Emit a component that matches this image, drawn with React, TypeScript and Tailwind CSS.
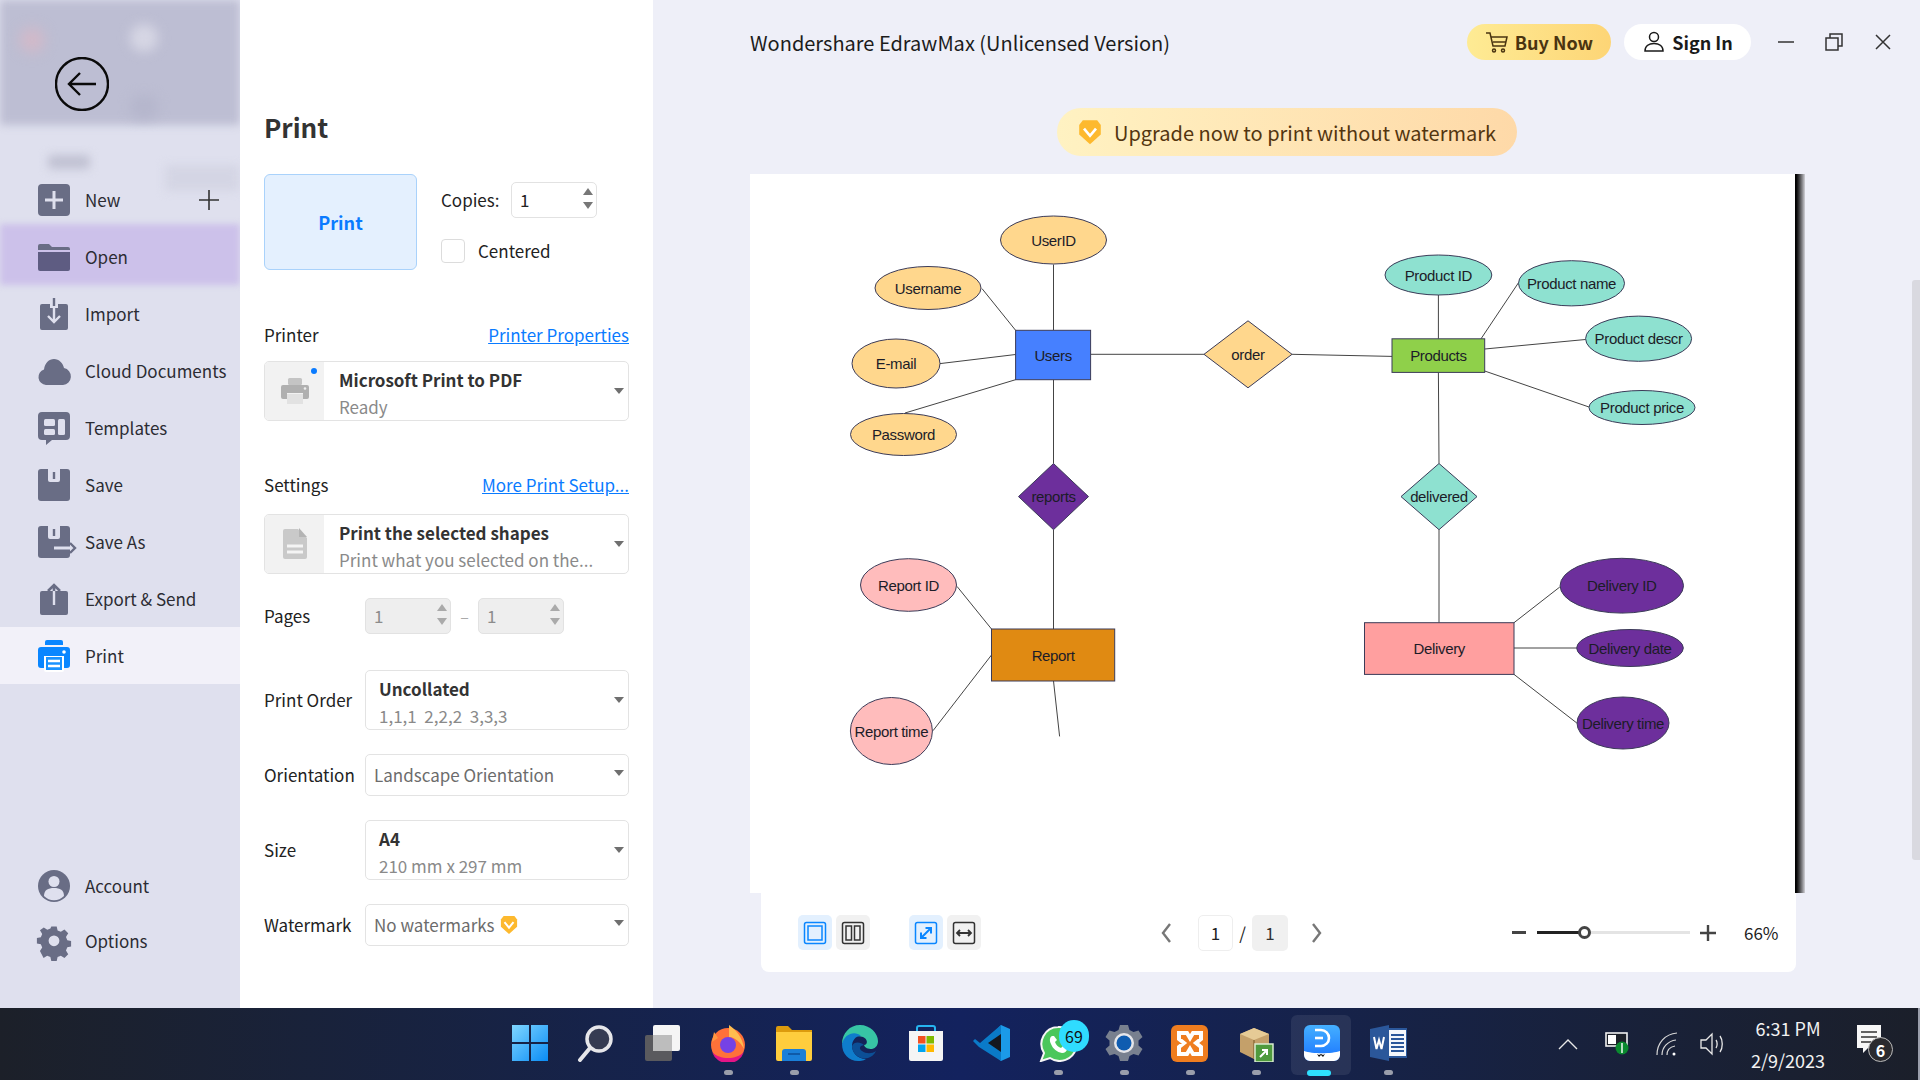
import type { ReactNode } from 'react'

const UI_FONT = "font-['Noto_Sans_CJK_SC','Noto_Sans',sans-serif]"

function Caret({ className = '' }: { className?: string }) {
  return (
    <svg width="10" height="6" viewBox="0 0 10 6" className={className}>
      <path d="M0 0h10L5 6z" fill="#6f6f6f" />
    </svg>
  )
}

function Diamond({ size = 20 }: { size?: number }) {
  return (
    <svg width={size} height={size * 1.1} viewBox="0 0 20 22">
      <path d="M4 1h12l3 4v8l-9 8-9-8V5z" fill="#fdb92e" />
      <path d="M5 8l5 6 5-6" fill="none" stroke="#fff" strokeWidth="2.2" />
    </svg>
  )
}

/* ---------- sidebar icons ---------- */
const ICON = '#696d85'
const SIDE_ICONS: Record<string, ReactNode> = {
  New: (
    <>
      <rect x="0" y="0" width="32" height="32" rx="4" fill={ICON} />
      <path d="M16 7v18M7 16h18" stroke="#dfe0ee" strokeWidth="3" />
    </>
  ),
  Open: (
    <>
      <path d="M0 5a2 2 0 0 1 2-2h9l3 3h16a2 2 0 0 1 2 2v1H0z" fill={ICON} />
      <path d="M0 11h32v17a2 2 0 0 1-2 2H2a2 2 0 0 1-2-2z" fill="#5e5c82" />
    </>
  ),
  Import: (
    <>
      <path d="M4 6h8v4h8V6h8a2 2 0 0 1 2 2v22a2 2 0 0 1-2 2H4a2 2 0 0 1-2-2V8a2 2 0 0 1 2-2z" fill={ICON} />
      <path d="M16 8v16M10 18l6 6 6-6" fill="none" stroke="#dfe0ee" strokeWidth="2.4" />
      <path d="M16 0v8" stroke={ICON} strokeWidth="2.4" />
    </>
  ),
  'Cloud Documents': (
    <path
      d="M8 30a8 8 0 0 1-2-15.6C7 8 11 4 16 4c5 0 9 4 10 9a8.6 8.6 0 0 1-1 17z"
      fill={ICON}
    />
  ),
  Templates: (
    <>
      <path d="M4 0h24a4 4 0 0 1 4 4v20a4 4 0 0 1-4 4H14l-6 5v-5H4a4 4 0 0 1-4-4V4a4 4 0 0 1 4-4z" fill={ICON} />
      <rect x="6" y="7" width="11" height="7" rx="1.5" fill="#dfe0ee" />
      <rect x="6" y="17" width="11" height="6" rx="1.5" fill="#dfe0ee" />
      <rect x="20" y="7" width="7" height="16" rx="1.5" fill="#dfe0ee" />
    </>
  ),
  Save: (
    <>
      <rect x="0" y="0" width="32" height="32" rx="3" fill={ICON} />
      <path d="M10 0h12v11a2 2 0 0 1-2 2h-8a2 2 0 0 1-2-2z" fill="#dfe0ee" />
      <path d="M16 3v7" stroke={ICON} strokeWidth="2.4" />
    </>
  ),
  'Save As': (
    <>
      <rect x="0" y="0" width="32" height="32" rx="3" fill={ICON} />
      <path d="M10 0h12v11a2 2 0 0 1-2 2h-8a2 2 0 0 1-2-2z" fill="#dfe0ee" />
      <path d="M16 3v7" stroke={ICON} strokeWidth="2.4" />
      <path d="M16 22h17" stroke="#dfe0ee" strokeWidth="3" />
      <path d="M32 17l5 5-5 5" fill="none" stroke={ICON} strokeWidth="2.4" />
    </>
  ),
  'Export & Send': (
    <>
      <path d="M4 8h24a2 2 0 0 1 2 2v20a2 2 0 0 1-2 2H4a2 2 0 0 1-2-2V10a2 2 0 0 1 2-2z" fill={ICON} />
      <path d="M16 22V8" stroke="#dfe0ee" strokeWidth="2.4" />
      <path d="M16 8V2M10 8l6-6 6 6" fill="none" stroke={ICON} strokeWidth="2.6" />
    </>
  ),
  Print: (
    <>
      <path d="M7 2a2 2 0 0 1 2-2h14a2 2 0 0 1 2 2v3H7z" fill="#0a86ff" />
      <path d="M3 7h26a3 3 0 0 1 3 3v15a3 3 0 0 1-3 3h-3V16H6v12H3a3 3 0 0 1-3-3V10a3 3 0 0 1 3-3z" fill="#0a86ff" />
      <circle cx="26" cy="12" r="1.8" fill="#fff" />
      <path d="M6 16h20v14a2 2 0 0 1-2 2H8a2 2 0 0 1-2-2z" fill="#fff" />
      <path d="M8 17h16v13H8z" fill="#1a92ff" />
      <path d="M10 21h12M10 26h12" stroke="#fff" strokeWidth="2.4" />
    </>
  ),
  Account: (
    <>
      <circle cx="16" cy="16" r="16" fill={ICON} />
      <circle cx="16" cy="11.5" r="5.5" fill="#dfe0ee" />
      <path d="M6 26c0-6 4-8 10-8s10 2 10 8a14 14 0 0 1-20 0z" fill="#dfe0ee" />
    </>
  ),
  Options: (
    <path
      fillRule="evenodd"
      d="M13 0h6l1 4.5 3.6 1.5 4-2.5 4.200 4.200-2.500 4 1.500 3.600 4.200 1v6l-4.200 1-1.500 3.600 2.500 4-4.200 4.200-4-2.500-3.600 1.500-1 4.400h-6l-1-4.400-3.600-1.500-4 2.500L.400 27.400l2.500-4L1.400 19.800-3 19v-6l4.400-1 1.500-3.600-2.500-4L4.600 1.200l4 2.500L12 2.200z M16 10a6 6 0 1 0 0 12a6 6 0 0 0 0-12z"
      transform="translate(1.600 1.400) scale(.9)"
      fill={ICON}
    />
  ),
}

function SideRow({ label, active = false, hot = false, plus = false }: { label: string; active?: boolean; hot?: boolean; plus?: boolean }) {
  return (
    <div
      className={`relative flex h-[57px] items-center gap-[15px] pl-[38px] text-[17px] text-[#2c2c33] ${
        active ? 'bg-[#f2f1f9]' : ''
      }`}
    >
      {hot && <div className="absolute inset-x-0 bottom-0 top-[-4px] bg-[#ccc1ea] blur-[3px]" />}
      <svg width="32" height="32" viewBox="0 0 32 32" className="relative shrink-0 overflow-visible">
        {SIDE_ICONS[label]}
      </svg>
      <span className="relative whitespace-nowrap">{label}</span>
      {plus && (
        <svg width="22" height="22" viewBox="0 0 22 22" className="absolute left-[198px] top-[18px]">
          <path d="M11 1v20M1 11h20" stroke="#333" strokeWidth="1.6" />
        </svg>
      )}
    </div>
  )
}

function Sidebar() {
  return (
    <aside className="relative flex w-[240px] shrink-0 flex-col overflow-hidden bg-[#dfe0ee]">
      {/* blurred app window showing through the backstage */}
      <div className="absolute inset-x-0 top-0 h-[125px] bg-[#bdbed3] blur-[4px]" />
      <div className="absolute left-[20px] top-[28px] h-[24px] w-[24px] rounded-full bg-[#d3b9c8] blur-[7px]" />
      <div className="absolute left-[130px] top-[24px] h-[28px] w-[28px] rounded-full bg-[#d6d6e4] blur-[6px]" />
      <div className="absolute left-[130px] top-[95px] h-[24px] w-[28px] rounded-full bg-[#b5b6cc] blur-[6px]" />
      <div className="absolute left-[48px] top-[155px] h-[14px] w-[42px] rounded bg-[#c0c1d2] blur-[5px]" />
      <div className="absolute left-[165px] top-[165px] h-[26px] w-[75px] rounded bg-[#d4d5e4] blur-[5px]" />

      <div className="relative h-[171px] pl-[55px] pt-[57px]">
        <svg width="54" height="54" viewBox="0 0 54 54">
          <circle cx="27" cy="27" r="26" fill="none" stroke="#0a0a0a" strokeWidth="2.4" />
          <path d="M41 27H14M25 16L14 27l11 11" fill="none" stroke="#0a0a0a" strokeWidth="2.4" />
        </svg>
      </div>
      <div className="relative flex flex-1 flex-col">
        <SideRow label="New" plus />
        <SideRow label="Open" hot />
        <SideRow label="Import" />
        <SideRow label="Cloud Documents" />
        <SideRow label="Templates" />
        <SideRow label="Save" />
        <SideRow label="Save As" />
        <SideRow label="Export & Send" />
        <SideRow label="Print" active />
        <div className="flex-1" />
        <SideRow label="Account" />
        <div className="-mt-[2px]">
          <SideRow label="Options" />
        </div>
        <div className="h-[39px]" />
      </div>
    </aside>
  )
}

/* ---------- print form ---------- */
function Spinner({ value, disabled = false, width }: { value: string; disabled?: boolean; width: string }) {
  return (
    <div
      className={`relative flex h-[36px] items-center rounded-[5px] border border-[#e2e2e2] pl-[8px] text-[17px] ${width} ${
        disabled ? 'bg-[#eeeeee] text-[#8c8c8c]' : 'bg-white text-[#222]'
      }`}
    >
      {value}
      <div className="absolute right-[3px] top-[5px] flex flex-col gap-[7px]">
        <svg width="10" height="7" viewBox="0 0 10 7"><path d="M5 0l5 7H0z" fill={disabled ? '#aaa' : '#777'} /></svg>
        <svg width="10" height="7" viewBox="0 0 10 7"><path d="M0 0h10L5 7z" fill={disabled ? '#aaa' : '#777'} /></svg>
      </div>
    </div>
  )
}

function Select({ title, sub, height, icon }: { title: string; sub: string; height: string; icon?: ReactNode }) {
  return (
    <div className={`relative flex w-full overflow-hidden rounded-[5px] border border-[#e3e3e3] bg-white ${height}`}>
      {icon && (
        <div className="flex w-[59px] shrink-0 items-center justify-center bg-[#f2f2f2]">{icon}</div>
      )}
      <div className={`flex flex-col justify-center pt-[4px] ${icon ? 'pl-[15px]' : 'pl-[13px]'}`}>
        <div className="whitespace-pre text-[17px] font-bold leading-[27px] text-[#333]">{title}</div>
        <div className="whitespace-pre text-[17px] leading-[27px] text-[#8a8a8a]">{sub}</div>
      </div>
      <Caret className="absolute right-[4px] top-[26px]" />
    </div>
  )
}

function OneLine({ children }: { children: ReactNode }) {
  return (
    <div className="relative flex h-[42px] w-full items-center rounded-[5px] border border-[#e3e3e3] bg-white pl-[8px] text-[17px] text-[#6c6c6c]">
      {children}
      <Caret className="absolute right-[4px] top-[15px]" />
    </div>
  )
}

function FormRow({ label, mt, children }: { label: string; mt: string; children: ReactNode }) {
  return (
    <div className={`flex items-center ${mt}`}>
      <div className="w-[101px] shrink-0 whitespace-nowrap text-[17px] text-[#222]">{label}</div>
      <div className="flex-1">{children}</div>
    </div>
  )
}

function PrintPanel() {
  return (
    <section className="w-[413px] shrink-0 bg-white px-[24px] pt-[107px]">
      <h1 className="h-[40px] text-[26px] font-bold leading-[40px] text-[#333]">Print</h1>

      <div className="mt-[27px] flex h-[96px]">
        <div className="flex w-[153px] items-center justify-center rounded-[6px] border border-[#a9d2fb] bg-[#e4f0fe] text-[18px] font-bold text-[#0a7bff]">
          Print
        </div>
        <div className="ml-[24px] flex flex-col">
          <div className="mt-[8px] flex items-center text-[17px] text-[#222]">
            <span className="w-[70px]">Copies:</span>
            <Spinner value="1" width="w-[86px]" />
          </div>
          <div className="mt-[20px] flex items-center gap-[13px] text-[17px] text-[#222]">
            <div className="h-[24px] w-[24px] rounded-[4px] border border-[#dcdcdc] bg-white" />
            Centered
          </div>
        </div>
      </div>

      <div className="mt-[53px] flex h-[24px] items-center justify-between text-[17px]">
        <span className="text-[#222]">Printer</span>
        <span className="text-[#0a7bff] underline">Printer Properties</span>
      </div>
      <div className="relative mt-[14px]">
        <Select
          title="Microsoft Print to PDF"
          sub="Ready"
          height="h-[60px]"
          icon={
            <svg width="30" height="30" viewBox="0 0 30 30">
              <rect x="8" y="2" width="14" height="7" rx="1.500" fill="#c4c4c4" />
              <path d="M3 9h24a2 2 0 0 1 2 2v10a2 2 0 0 1-2 2h-4v-6H7v6H3a2 2 0 0 1-2-2V11a2 2 0 0 1 2-2z" fill="#b0b0b0" />
              <path d="M7 18h16v10H7z" fill="#e2e2e2" />
              <circle cx="25" cy="12.500" r="1.300" fill="#eee" />
            </svg>
          }
        />
        <div className="absolute left-[47px] top-[7px] h-[6px] w-[6px] rounded-full bg-[#0a7bff]" />
      </div>

      <div className="mt-[52px] flex h-[24px] items-center justify-between text-[17px]">
        <span className="text-[#222]">Settings</span>
        <span className="text-[#0a7bff] underline">More Print Setup...</span>
      </div>
      <div className="mt-[17px]">
        <Select
          title="Print the selected shapes"
          sub="Print what you selected on the..."
          height="h-[60px]"
          icon={
            <svg width="26" height="32" viewBox="0 0 26 32">
              <path d="M3 1h13l9 9v19a2 2 0 0 1-2 2H3a2 2 0 0 1-2-2V3a2 2 0 0 1 2-2z" fill="#c9c9c9" />
              <path d="M17 0l8 9h-8z" fill="#b4b4b4" />
              <path d="M5 18h16M5 24h16" stroke="#f4f4f4" strokeWidth="3" />
            </svg>
          }
        />
      </div>

      <FormRow label="Pages" mt="mt-[24px]">
        <div className="flex items-center">
          <Spinner value="1" disabled width="w-[86px]" />
          <span className="w-[27px] text-center text-[#aaa]">–</span>
          <Spinner value="1" disabled width="w-[86px]" />
        </div>
      </FormRow>
      <FormRow label="Print Order" mt="mt-[36px]">
        <Select title="Uncollated" sub="1,1,1  2,2,2  3,3,3" height="h-[60px]" />
      </FormRow>
      <FormRow label="Orientation" mt="mt-[24px]">
        <OneLine>Landscape Orientation</OneLine>
      </FormRow>
      <FormRow label="Size" mt="mt-[24px]">
        <Select title="A4" sub="210 mm x 297 mm" height="h-[60px]" />
      </FormRow>
      <FormRow label="Watermark" mt="mt-[24px]">
        <OneLine>
          <span className="mr-[5px]">No watermarks</span>
          <Diamond size={18} />
        </OneLine>
      </FormRow>
    </section>
  )
}

/* ---------- ER diagram ---------- */
const STROKE = '#3b3b58'
const LINES = [
  [1053.5, 264.5, 1053.5, 330], [982, 288.6, 1015.6, 330.3], [940, 363.6, 1015.6, 354.5], [905, 413, 1015.6, 379.7],
  [1090.6, 354.3, 1204, 354.3], [1292, 354.3, 1392, 356.4], [1053.5, 379.7, 1053.5, 463.5], [1053.5, 529.7, 1053.5, 629],
  [957, 586.4, 991.5, 629], [933, 730.7, 991.5, 655], [1053.5, 681, 1059.6, 736.4],
  [1438.4, 295, 1438.4, 338.8], [1481, 338.8, 1518.3, 283], [1484.7, 349, 1585.5, 339.5], [1484.7, 371, 1589, 407],
  [1438.4, 372.4, 1439, 463.5], [1439, 529.7, 1439, 622.7], [1514, 622.7, 1559.8, 587], [1514, 648, 1576.8, 648], [1514, 674.4, 1576.8, 723],
]
const ELLIPSES: [number, number, number, number, string, string][] = [
  [1053.5, 240, 53, 24, '#ffd78d', 'UserID'],
  [928, 288, 53, 21.5, '#ffd78d', 'Username'],
  [896, 363.5, 44, 24.5, '#ffd78d', 'E-mail'],
  [903.5, 434.5, 53, 21, '#ffd78d', 'Password'],
  [908.5, 585, 48, 26.3, '#ffbcbc', 'Report ID'],
  [891.4, 731, 41, 33.5, '#ffbcbc', 'Report time'],
  [1438.4, 275, 53.4, 20, '#8ee1d0', 'Product ID'],
  [1571.5, 283.3, 53, 22.6, '#8ee1d0', 'Product name'],
  [1638.6, 338.7, 53, 22.6, '#8ee1d0', 'Product descr'],
  [1642, 407.5, 53, 17, '#8ee1d0', 'Product price'],
  [1621.8, 585.7, 61.7, 27.4, '#6d2f9c', 'Delivery ID'],
  [1630, 648, 53.3, 18.5, '#6d2f9c', 'Delivery date'],
  [1623, 723, 46, 26, '#6d2f9c', 'Delivery time'],
]
const RECTS: [number, number, number, number, string, string][] = [
  [1015.6, 330.3, 75, 49.4, '#4680ff', 'Users'],
  [1392, 338.8, 92.7, 33.6, '#8fd04a', 'Products'],
  [991.5, 629, 123.2, 52, '#e08a12', 'Report'],
  [1364.5, 622.7, 149.5, 51.7, '#ff9f9f', 'Delivery'],
]
const DIAMONDS: [number, number, number, number, string, string][] = [
  [1248, 354.3, 44, 33.5, '#ffd78d', 'order'],
  [1053.5, 496.6, 35, 33.1, '#6d2f9c', 'reports'],
  [1439, 496.6, 38, 33.1, '#8ee1d0', 'delivered'],
]

function Label({ x, y, children }: { x: number; y: number; children: string }) {
  return (
    <text
      x={x}
      y={y + 5.5}
      textAnchor="middle"
      fontFamily="'Liberation Sans', sans-serif"
      fontSize="15"
      letterSpacing="-0.35"
      fill="#1c1c28"
    >
      {children}
    </text>
  )
}

function ErDiagram() {
  return (
    <svg width="1045" height="719" viewBox="750 174 1045 719" className="block bg-white">
      {LINES.map((l, i) => (
        <line key={i} x1={l[0]} y1={l[1]} x2={l[2]} y2={l[3]} stroke="#444" strokeWidth="1" />
      ))}
      {ELLIPSES.map(([cx, cy, rx, ry, fill, name]) => (
        <g key={name}>
          <ellipse cx={cx} cy={cy} rx={rx} ry={ry} fill={fill} stroke={STROKE} strokeWidth="1" />
          <Label x={cx} y={cy}>{name}</Label>
        </g>
      ))}
      {RECTS.map(([x, y, w, h, fill, name]) => (
        <g key={name}>
          <rect x={x} y={y} width={w} height={h} fill={fill} stroke={STROKE} strokeWidth="1" />
          <Label x={x + w / 2} y={y + h / 2}>{name}</Label>
        </g>
      ))}
      {DIAMONDS.map(([cx, cy, rx, ry, fill, name]) => (
        <g key={name}>
          <path d={`M${cx - rx} ${cy}L${cx} ${cy - ry}L${cx + rx} ${cy}L${cx} ${cy + ry}z`} fill={fill} stroke={STROKE} strokeWidth="1" />
          <Label x={cx} y={cy}>{name}</Label>
        </g>
      ))}
    </svg>
  )
}

/* ---------- right hand side ---------- */
function ToolBtn({ on, children, className = '' }: { on?: boolean; children: ReactNode; className?: string }) {
  return (
    <div className={`flex h-[35px] w-[34px] items-center justify-center rounded-[5px] ${on ? 'bg-[#e3f0fe]' : 'bg-[#f1f1f1]'} ${className}`}>
      <svg width="24" height="24" viewBox="0 0 24 24" fill="none" stroke={on ? '#0a86ff' : '#333'} strokeWidth="1.5">
        <rect x="1.500" y="1.500" width="21" height="21" rx="2" />
        {children}
      </svg>
    </div>
  )
}

function Toolbar() {
  return (
    <div className="ml-[11px] flex h-[79px] w-[1035px] items-center rounded-b-[8px] bg-white pl-[37px] text-[17px]">
      <ToolBtn on><rect x="5" y="5" width="14" height="14" /></ToolBtn>
      <ToolBtn className="ml-[4px]"><rect x="5" y="5" width="5.500" height="14" /><rect x="13.500" y="5" width="5.500" height="14" /></ToolBtn>
      <ToolBtn on className="ml-[39px]"><path d="M7 17L17 7M11.500 7H17v5.500M7 11.500V17h5.500" strokeWidth="2" /></ToolBtn>
      <ToolBtn className="ml-[4px]"><path d="M5 12h14M8 9l-3 3 3 3M16 9l3 3-3 3" strokeWidth="1.800" /></ToolBtn>

      <svg width="12" height="20" viewBox="0 0 12 20" className="ml-[179px]">
        <path d="M10 1L3 10l7 9" fill="none" stroke="#777" strokeWidth="2.400" />
      </svg>
      <div className="ml-[26px] flex h-[36px] w-[35px] items-center justify-center rounded-[5px] border border-[#eeeeee] text-[#222]">1</div>
      <span className="w-[19px] text-center text-[#222]">/</span>
      <div className="flex h-[36px] w-[36px] items-center justify-center rounded-[5px] bg-[#f0f0f0] text-[#333]">1</div>
      <svg width="12" height="20" viewBox="0 0 12 20" className="ml-[23px]">
        <path d="M2 1l7 9-7 9" fill="none" stroke="#777" strokeWidth="2.400" />
      </svg>

      <div className="ml-[189px] h-[3px] w-[14px] bg-[#444]" />
      <div className="relative ml-[11px] h-[3px] w-[153px] bg-[#e4e4e4]">
        <div className="h-full w-[47px] bg-[#222]" />
        <div className="absolute left-[41px] top-[-5px] h-[13px] w-[13px] rounded-full border-[3px] border-[#444] bg-white" />
      </div>
      <svg width="16" height="16" viewBox="0 0 16 16" className="ml-[10px]">
        <path d="M8 0v16M0 8h16" stroke="#444" strokeWidth="2.400" />
      </svg>
      <span className="ml-[28px] text-[#222]">66%</span>
    </div>
  )
}

function TopIcons() {
  return (
    <div className="relative ml-[599px] mt-[4px] flex h-[30px] items-center">
      <svg width="24" height="24" viewBox="0 0 24 24" className="ml-[1px]" fill="none" stroke="#6a6a6a" strokeWidth="1.300">
        <circle cx="12" cy="12" r="10" />
        <path d="M9 9.500a3 3 0 1 1 4.500 2.600c-1 .6-1.500 1.200-1.500 2.400M12 16.500v1.500" />
      </svg>
      <div className="absolute left-[26px] top-[-8px] h-[8px] w-[8px] rounded-full bg-[#ff4040]" />
      <Caret className="ml-[4px] scale-75" />
      <svg width="24" height="24" viewBox="0 0 24 24" className="ml-[15px]" fill="none" stroke="#6a6a6a" strokeWidth="1.300">
        <path d="M3 18c2-2 2-4 2-7a7 7 0 0 1 14 0c0 3 0 5 2 7zM9 21.500h6" />
      </svg>
      <svg width="24" height="24" viewBox="0 0 24 24" className="ml-[20px]" fill="none" stroke="#6a6a6a" strokeWidth="1.300">
        <circle cx="7" cy="7" r="4" /><circle cx="17" cy="7" r="4" /><circle cx="7" cy="17" r="4" /><circle cx="17" cy="17" r="4" />
      </svg>
      <Caret className="ml-[1px] scale-75" />
      <svg width="24" height="24" viewBox="0 0 24 24" className="ml-[12px]" fill="none" stroke="#6a6a6a" strokeWidth="1.300">
        <path d="M8 2L2 6l2.500 5L7 10v12h10V10l2.500 1L22 6l-6-4c-1 3-7 3-8 0z" />
      </svg>
      <Caret className="ml-[3px] scale-75" />
      <svg width="24" height="24" viewBox="0 0 24 24" className="ml-[15px]" fill="none" stroke="#6a6a6a" strokeWidth="1.300">
        <path d="M10 1.500h4l.7 3 2.500 1.200 2.800-1.500 2.200 3.400-2.400 2 .1 2.800 2.300 2-2.100 3.500-2.900-1.400-2.500 1.300-.7 3.200h-4l-.7-3.200-2.500-1.300-2.900 1.400-2.100-3.500 2.300-2 .1-2.800-2.400-2 2.200-3.400 2.800 1.500 2.500-1.200z" />
        <circle cx="12" cy="12" r="3.500" />
      </svg>
    </div>
  )
}

function MainArea() {
  return (
    <main className="relative min-w-0 flex-1 bg-[#eeeff8] pl-[97px] pt-[24px]">
      <div className="flex h-[36px] items-center">
        <div className="w-[714px] translate-y-[1px] whitespace-nowrap text-[20px] text-[#1c1c1c]">
          Wondershare EdrawMax (Unlicensed Version)
        </div>
        <div className="ml-[3px] flex h-[36px] w-[144px] items-center justify-center gap-[6px] rounded-[18px] bg-gradient-to-r from-[#feeb94] to-[#fdd576] text-[18px] font-semibold text-[#4a3410]">
          <svg width="24" height="24" viewBox="0 0 24 24" fill="none" stroke="#4a3410" strokeWidth="1.500">
            <path d="M1 3h4l3 13h12l2-9H6" />
            <circle cx="9" cy="20.500" r="1.500" />
            <circle cx="18" cy="20.500" r="1.500" />
            <path d="M8 12h13" />
          </svg>
          Buy Now
        </div>
        <div className="ml-[13px] flex h-[36px] w-[127px] items-center justify-center gap-[6px] rounded-[18px] bg-white text-[18px] font-semibold text-[#1a1a1a]">
          <svg width="24" height="24" viewBox="0 0 24 24" fill="none" stroke="#1a1a1a" strokeWidth="1.500">
            <circle cx="12" cy="7" r="4.500" />
            <path d="M3 21c0-5 4-7.500 9-7.500s9 2.500 9 7.500z" />
          </svg>
          Sign In
        </div>
        <svg width="18" height="18" viewBox="0 0 18 18" className="ml-[26px]"><path d="M1 9h16" stroke="#333" strokeWidth="1.500" /></svg>
        <svg width="20" height="20" viewBox="0 0 20 20" className="ml-[29px]" fill="none" stroke="#333" strokeWidth="1.500">
          <rect x="2" y="6" width="12" height="12" />
          <path d="M6 6V2h12v12h-4" />
        </svg>
        <svg width="18" height="18" viewBox="0 0 18 18" className="ml-[30px]"><path d="M2 2l14 14M16 2L2 16" stroke="#333" strokeWidth="1.500" /></svg>
      </div>

      <div className="mt-[48px] flex h-[48px]">
        <div className="ml-[307px] flex h-[48px] w-[460px] shrink-0 items-center justify-center gap-[12px] rounded-[24px] bg-gradient-to-r from-[#fff2c2] to-[#fed9a8] text-[20px] text-[#53350f]">
          <Diamond size={24} />
          <span className="translate-y-[1px]">Upgrade now to print without watermark</span>
        </div>
        <TopIcons />
      </div>

      <div className="mt-[18px] flex">
        <ErDiagram />
        <div className="h-[719px] w-[10px] bg-gradient-to-r from-[#000000] to-[#d2d2d8]" />
      </div>
      <Toolbar />

      {/* scrollbar */}
      <div className="absolute right-0 top-[280px] h-[580px] w-[8px] rounded-l-[3px] bg-[#d9d9e0]" />
    </main>
  )
}

/* ---------- taskbar ---------- */
const TASK_ICONS: { key: string; dot?: boolean; node: ReactNode }[] = [
  {
    key: 'start',
    node: (
      <>
        <defs>
          <linearGradient id="win" x1="0" y1="0" x2="1" y2="1">
            <stop offset="0" stopColor="#7fd6ff" />
            <stop offset="1" stopColor="#0a8cf5" />
          </linearGradient>
        </defs>
        <path d="M1 1h17v17H1zM20 1h17v17H20zM1 20h17v17H1zM20 20h17v17H20z" fill="url(#win)" />
      </>
    ),
  },
  {
    key: 'search',
    node: (
      <>
        <circle cx="22" cy="15" r="12" fill="#353b52" stroke="#e6e6ea" strokeWidth="3.500" />
        <path d="M13 24L3 36" stroke="#e6e6ea" strokeWidth="4" strokeLinecap="round" />
      </>
    ),
  },
  {
    key: 'tasks',
    node: (
      <>
        <rect x="2" y="11" width="27" height="26" rx="2" fill="#5a5a5e" />
        <rect x="10" y="1" width="27" height="26" rx="2" fill="#f5f5f5" />
        <rect x="10" y="11" width="19" height="16" fill="#bdbdbd" />
      </>
    ),
  },
  {
    key: 'firefox',
    dot: true,
    node: (
      <>
        <circle cx="19" cy="21" r="17" fill="#ff7139" />
        <path d="M3 28a17 17 0 0 0 32 0c-8 8-24 8-32 0z" fill="#e31587" />
        <path d="M20 1c6 4 14 12 15 24-3-6-9-12-15-12z" fill="#ffbd4f" />
        <path d="M5 8l4 6-6 4z" fill="#ff9640" />
        <circle cx="19" cy="21" r="8" fill="#7542e5" />
      </>
    ),
  },
  {
    key: 'files',
    dot: true,
    node: (
      <>
        <path d="M1 4a2 2 0 0 1 2-2h10l4 4h20v4H1z" fill="#dc9b0d" />
        <path d="M1 8h36v27a2 2 0 0 1-2 2H3a2 2 0 0 1-2-2z" fill="#fecd3d" />
        <path d="M7 37V28a3 3 0 0 1 3-3h18a3 3 0 0 1 3 3v9z" fill="#1a7fd8" />
        <path d="M13 30h12" stroke="#0f5aa8" strokeWidth="2" />
      </>
    ),
  },
  {
    key: 'edge',
    node: (
      <>
        <path d="M19 1c10 0 18 8 18 16 0 4-2 7-6 8-4 0-7-1-8-4 4 0 4-6-1-8C12 10 5 14 1 20 1 9 9 1 19 1z" fill="#37c5a5" />
        <path d="M1 20C3 10 14 6 20 12c-6 0-9 5-9 10 0 6 5 13 14 13-3 2-6 2-8 2C8 37 1 30 1 20z" fill="#0f7dcc" />
        <path d="M11 22c0 8 8 14 16 12 3-1 6-3 8-7-4 3-10 3-14 0-3-2-3-5 2-6-3-3-10-4-12 1z" fill="#0c4f96" />
      </>
    ),
  },
  {
    key: 'store',
    node: (
      <>
        <path d="M10 8V4a2 2 0 0 1 2-2h14a2 2 0 0 1 2 2v4" fill="none" stroke="#26b4f0" strokeWidth="2" />
        <path d="M2 7h34v28a2 2 0 0 1-2 2H4a2 2 0 0 1-2-2z" fill="#f5f5f5" />
        <rect x="11" y="12" width="7.500" height="7.500" fill="#f25022" />
        <rect x="19.500" y="12" width="7.500" height="7.500" fill="#7fba00" />
        <rect x="11" y="20.500" width="7.500" height="7.500" fill="#00a4ef" />
        <rect x="19.500" y="20.500" width="7.500" height="7.500" fill="#ffb900" />
      </>
    ),
  },
  {
    key: 'vscode',
    node: (
      <>
        <path d="M28 1l9 4v28l-9 4L11 20z" fill="#1b9ae8" />
        <path d="M28 1L7 19 2 15l-2 2 6 6 22 14z" fill="#0a7ac8" />
        <path d="M28 10v18l-13-9z" fill="#14171f" />
      </>
    ),
  },
  {
    key: 'whatsapp',
    dot: true,
    node: (
      <>
        <path d="M19 3a17 17 0 0 0-14 26L2 37l9-3A17 17 0 1 0 19 3z" fill="#4bc75b" stroke="#f5f5f5" strokeWidth="2" />
        <path d="M13 12c-2 1-3 4-1 8 2 5 6 8 11 9 3 0 5-2 5-4l-4-3-2 2c-3-1-5-3-6-6l2-2-3-4z" fill="#fff" />
      </>
    ),
  },
  {
    key: 'settings',
    dot: true,
    node: (
      <>
        <path
          d="M15 1h8l1.500 5 4 2 5-1.500 4 6.500-4 3.500v5l4 3.500-4 6.500-5-1.500-4 2L23 37h-8l-1.500-5-4-2-5 1.500-4-6.500 4-3.500v-5L.500 13l4-6.500 5 1.500 4-2z"
          fill="#78808f"
        />
        <circle cx="19" cy="19" r="10" fill="#e6e6ea" />
        <circle cx="19" cy="19" r="7.500" fill="#0f5cb0" />
      </>
    ),
  },
  {
    key: 'xampp',
    dot: true,
    node: (
      <>
        <rect x="0" y="1" width="37" height="37" rx="6" fill="#ef7d1f" />
        <path d="M8 9h8l3 5 3-5h8v6l-5 4 5 4v7h-8l-3-5-3 5H8v-7l5-4-5-4z" fill="none" stroke="#fff" strokeWidth="4" />
      </>
    ),
  },
  {
    key: 'package',
    dot: true,
    node: (
      <>
        <path d="M3 10L17 4l15 6v18L17 35 3 28z" fill="#c4a06a" />
        <path d="M3 10l14 6 15-6-15-6z" fill="#e6cb96" />
        <path d="M17 16v19" stroke="#8f6f3d" strokeWidth="1.500" />
        <rect x="18" y="20" width="18" height="18" fill="#4f9a3d" stroke="#d9ecd0" strokeWidth="1.500" />
        <path d="M23 33l7-7M25 26h5v5" stroke="#fff" strokeWidth="2" fill="none" />
      </>
    ),
  },
  {
    key: 'edraw',
    node: (
      <>
        <defs>
          <linearGradient id="ed" x1="0" y1="0" x2="0" y2="1">
            <stop offset="0" stopColor="#45b0ff" />
            <stop offset="1" stopColor="#1a74ff" />
          </linearGradient>
        </defs>
        <path d="M7 1h24a6 6 0 0 1 6 6v24a6 6 0 0 1-6 6H7a6 6 0 0 1-6-6V7a6 6 0 0 1 6-6z" fill="url(#ed)" />
        <path d="M1 27c8 3 28 3 36 0v4a6 6 0 0 1-6 6H7a6 6 0 0 1-6-6z" fill="#fff" />
        <path d="M12 6h6a8 8 0 0 1 0 16h-6" fill="none" stroke="#fff" strokeWidth="2.600" />
        <path d="M12 14h8" stroke="#fff" strokeWidth="2.600" />
        <path d="M14 30l2 3 2-2 2 2 2-3-2 1-2-1-2 1z" fill="#111" />
      </>
    ),
  },
  {
    key: 'word',
    dot: true,
    node: (
      <>
        <rect x="13" y="5" width="25" height="28" fill="#f5f7fb" stroke="#2b579a" strokeWidth="2" />
        <path d="M22 11h13M22 15h13M22 19h13M22 23h13M22 27h13" stroke="#2b579a" strokeWidth="1.800" />
        <path d="M1 5l19-4v36L1 33z" fill="#2b579a" />
        <path d="M5 13l2.500 12 2.500-9 2.500 9L15 13" fill="none" stroke="#fff" strokeWidth="2" />
      </>
    ),
  },
]

function Taskbar() {
  return (
    <footer className="relative flex h-[72px] items-center bg-[#1b2030] bg-gradient-to-r from-[#1c2029] via-[#13225e] to-[#1b1f2a]">
      <div className="ml-[497px] flex">
        {TASK_ICONS.map((t) => (
          <div key={t.key} className="relative flex h-[72px] w-[66px] items-center justify-center">
            {t.key === 'edraw' && (
              <>
                <div className="absolute left-[2px] top-[7px] h-[60px] w-[60px] rounded-[6px] bg-[#ffffff14]" />
                <div className="absolute left-[18px] top-[62px] h-[6px] w-[24px] rounded-[3px] bg-[#2ee0ff]" />
              </>
            )}
            <svg width="38" height="38" viewBox="0 0 38 38" className="relative -mt-[2px]">
              {t.node}
            </svg>
            {t.dot && <div className="absolute left-[29px] top-[62px] h-[5px] w-[9px] rounded-[3px] bg-[#9a9eab]" />}
            {t.key === 'whatsapp' && (
              <div className="absolute left-[34px] top-[12px] flex h-[32px] w-[30px] items-center justify-center rounded-full bg-[#2fdcff] text-[16px] text-[#111]">
                69
              </div>
            )}
          </div>
        ))}
      </div>

      <div className="ml-[137px] flex items-center text-white">
        <svg width="20" height="12" viewBox="0 0 20 12" fill="none" stroke="#e8e8e8" strokeWidth="1.400">
          <path d="M1 11l9-9 9 9" />
        </svg>
        <div className="relative ml-[27px]">
          <svg width="24" height="26" viewBox="0 0 24 26" className="overflow-visible">
            <rect x="1" y="2" width="21" height="13" fill="#1c2029" stroke="#f0f0f0" strokeWidth="1.600" />
            <rect x="3" y="4" width="8" height="9" fill="#fff" />
            <circle cx="17" cy="17" r="6.500" fill="#0a8a2f" />
            <path d="M17 12v10" stroke="#fff" strokeWidth="1.400" />
          </svg>
        </div>
        <svg width="24" height="26" viewBox="0 0 24 26" className="ml-[26px]" fill="none" stroke="#d8d8d8" strokeWidth="1.200">
          <path d="M2 24C2 12 10 3 22 2M7 24c0-8 6-14 14-15M12 24c0-5 3-8 8-9" />
          <circle cx="19" cy="23" r="1.500" fill="#fff" stroke="none" />
        </svg>
        <svg width="24" height="26" viewBox="0 0 24 26" className="ml-[21px]" fill="none" stroke="#e8e8e8" strokeWidth="1.300">
          <path d="M1 9h5l6-6v20l-6-6H1z" />
          <path d="M16 9c1.500 2 1.500 6 0 8M20 5c3 4 3 12 0 16" />
        </svg>
        <div className="ml-[9px] flex w-[110px] flex-col items-center gap-[10px] leading-[22px] text-[#f2f2f2]">
          <span className="text-[18px]">6:31 PM</span>
          <span className="text-[18px]">2/9/2023</span>
        </div>
        <div className="relative ml-[13px] h-[40px] w-[36px]">
          <svg width="26" height="30" viewBox="0 0 26 30" className="absolute left-0 top-0">
            <path d="M1 1h24v23H12l-5 5v-5H1z" fill="#f7f7f7" />
            <path d="M5 8h16M5 13h16M5 18h10" stroke="#333" strokeWidth="1.500" />
          </svg>
          <div className="absolute left-[12px] top-[13px] flex h-[25px] w-[25px] items-center justify-center rounded-full border border-[#bbb] bg-[#2a2a2e] text-[16px] font-semibold text-white">
            6
          </div>
        </div>
      </div>
      <div className="absolute right-0 top-0 h-full w-[2px] bg-[#9a9eab]" />
    </footer>
  )
}

export default function App() {
  return (
    <div className={`flex h-[1080px] w-[1920px] flex-col overflow-hidden ${UI_FONT}`}>
      <div className="flex h-[1008px]">
        <Sidebar />
        <PrintPanel />
        <MainArea />
      </div>
      <Taskbar />
    </div>
  )
}
